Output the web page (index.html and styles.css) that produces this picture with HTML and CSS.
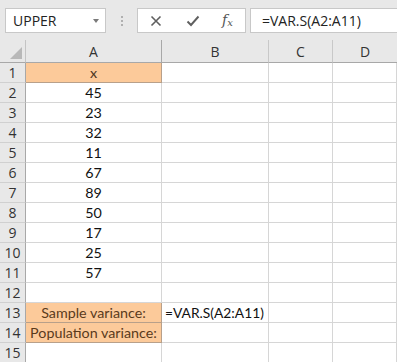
FILE: index.html
```html
<!DOCTYPE html>
<html>
<head>
<meta charset="utf-8">
<link rel="stylesheet" href="styles.css">
</head>
<body>
<div class="toolbar">
  <div class="namebox"><span>UPPER</span><span class="caret"></span></div>
  <div class="dots"><i></i><i></i><i></i></div>
  <div class="controls">
    <svg class="ico" width="12" height="12" viewBox="0 0 12 12"><path d="M1.5 1.5 L10.5 10.5 M10.5 1.5 L1.5 10.5" stroke="#5f5f5f" stroke-width="1.6" fill="none"/></svg>
    <svg class="ico" width="14" height="12" viewBox="0 0 14 12"><path d="M1.5 6.5 L5 10 L12.5 1.5" stroke="#5f5f5f" stroke-width="1.9" fill="none"/></svg>
    <span class="fx">f<sub>x</sub></span>
  </div>
  <div class="formula">=VAR.S(A2:A11)</div>
</div>
<div class="sheet">
  <div class="hd corner"><span class="tri"></span></div>
  <div class="hd col">A</div>
  <div class="hd col">B</div>
  <div class="hd col">C</div>
  <div class="hd col last">D</div>

  <div class="hd row">1</div><div class="c org">x</div><div class="c"></div><div class="c"></div><div class="c"></div>
  <div class="hd row">2</div><div class="c num">45</div><div class="c"></div><div class="c"></div><div class="c"></div>
  <div class="hd row">3</div><div class="c num">23</div><div class="c"></div><div class="c"></div><div class="c"></div>
  <div class="hd row">4</div><div class="c num">32</div><div class="c"></div><div class="c"></div><div class="c"></div>
  <div class="hd row">5</div><div class="c num">11</div><div class="c"></div><div class="c"></div><div class="c"></div>
  <div class="hd row">6</div><div class="c num">67</div><div class="c"></div><div class="c"></div><div class="c"></div>
  <div class="hd row">7</div><div class="c num">89</div><div class="c"></div><div class="c"></div><div class="c"></div>
  <div class="hd row">8</div><div class="c num">50</div><div class="c"></div><div class="c"></div><div class="c"></div>
  <div class="hd row">9</div><div class="c num">17</div><div class="c"></div><div class="c"></div><div class="c"></div>
  <div class="hd row">10</div><div class="c num">25</div><div class="c"></div><div class="c"></div><div class="c"></div>
  <div class="hd row">11</div><div class="c num">57</div><div class="c"></div><div class="c"></div><div class="c"></div>
  <div class="hd row">12</div><div class="c"></div><div class="c"></div><div class="c"></div><div class="c"></div>
  <div class="hd row">13</div><div class="c org lbl">Sample variance:</div><div class="c txt">=VAR.S(A2:A11)</div><div class="c"></div><div class="c"></div>
  <div class="hd row">14</div><div class="c org lbl">Population variance:</div><div class="c"></div><div class="c"></div><div class="c"></div>
  <div class="hd row">15</div><div class="c"></div><div class="c"></div><div class="c"></div><div class="c"></div>
</div>
</body>
</html>
```
FILE: styles.css
```css
html, body {
  margin: 0;
  padding: 0;
  background: #ffffff;
  overflow: hidden;
}
body {
  width: 397px;
  height: 362px;
  font-family: "Open Sans", "Noto Sans", sans-serif;
}
.toolbar {
  height: 40px;
  background: #e8e8e8;
  display: flex;
  align-items: flex-start;
  padding-top: 8px;
  box-sizing: border-box;
}
.namebox {
  margin-left: 5px;
  width: 101px;
  height: 25px;
  box-sizing: border-box;
  background: #fff;
  border: 1px solid #c8c8c8;
  display: flex;
  align-items: center;
  justify-content: space-between;
  padding: 0 6px 0 7px;
  font-size: 14px;
  color: #222;
}
.caret {
  width: 0;
  height: 0;
  border-left: 3.5px solid transparent;
  border-right: 3.5px solid transparent;
  border-top: 4px solid #7a7a7a;
  margin-top: 1px;
}
.dots {
  width: 31px;
  height: 25px;
  display: flex;
  flex-direction: column;
  align-items: center;
  justify-content: center;
  gap: 2px;
}
.dots i {
  display: block;
  width: 2px;
  height: 2px;
  background: #b0b0b0;
}
.controls {
  width: 109px;
  height: 25px;
  box-sizing: border-box;
  background: #fff;
  border: 1px solid #c8c8c8;
  display: flex;
  align-items: center;
  padding-left: 12px;
  gap: 0;
}
.controls .ico:first-child { margin-right: 24px; }
.controls .ico:nth-child(2) { margin-right: 22px; }
.fx {
  font-family: "DejaVu Serif", "Liberation Serif", serif;
  font-style: italic;
  font-size: 14px;
  color: #555;
  line-height: 1;
}
.fx sub {
  font-size: 10px;
  vertical-align: -1px;
}
.formula {
  margin-left: 4px;
  flex: 1;
  height: 25px;
  box-sizing: border-box;
  background: #fff;
  border: 1px solid #c8c8c8;
  border-right: none;
  font-size: 14px;
  color: #222;
  padding-left: 11px;
  line-height: 23px;
}
.sheet {
  display: grid;
  grid-template-columns: 26px 136px 107px 64px 1fr;
  grid-template-rows: 23px repeat(15, 20px);
}
.hd {
  background: #e8e8e8;
  color: #333;
  font-size: 14px;
  box-sizing: border-box;
  display: flex;
  align-items: center;
  justify-content: center;
  font-family: "Open Sans", "Noto Sans", sans-serif;
}
.corner {
  border-right: 1px solid #c4c4c4;
  border-bottom: 1px solid #a8a8a8;
  position: relative;
}
.tri {
  position: absolute;
  right: 3px;
  bottom: 3px;
  width: 0;
  height: 0;
  border-left: 12px solid transparent;
  border-bottom: 12px solid #b8b8b8;
}
.col {
  border-right: 1px solid #c8c8c8;
  border-bottom: 1px solid #a8a8a8;
  padding-top: 1px;
}
.col:nth-child(2) { border-right-color: #a8a8a8; }
.col.last { border-right: none; }
.row {
  border-right: 1px solid #a8a8a8;
  border-bottom: 1px solid #d0d0d0;
}
.c {
  box-sizing: border-box;
  border-right: 1px solid #d6d6d6;
  border-bottom: 1px solid #d6d6d6;
  font-family: "Lato", "Open Sans", sans-serif;
  font-size: 14.3px;
  color: #111;
  display: flex;
  align-items: center;
  white-space: nowrap;
}
.num, .org {
  justify-content: center;
}
.org {
  background: #fcca9a;
  border-bottom-color: #b8a08a;
  border-right-color: #b8a08a;
  color: #4a3520;
}
.lbl { color: #5a3a1c; }
.txt {
  padding-left: 3px;
  font-size: 13.8px;
  color: #111;
}
```
